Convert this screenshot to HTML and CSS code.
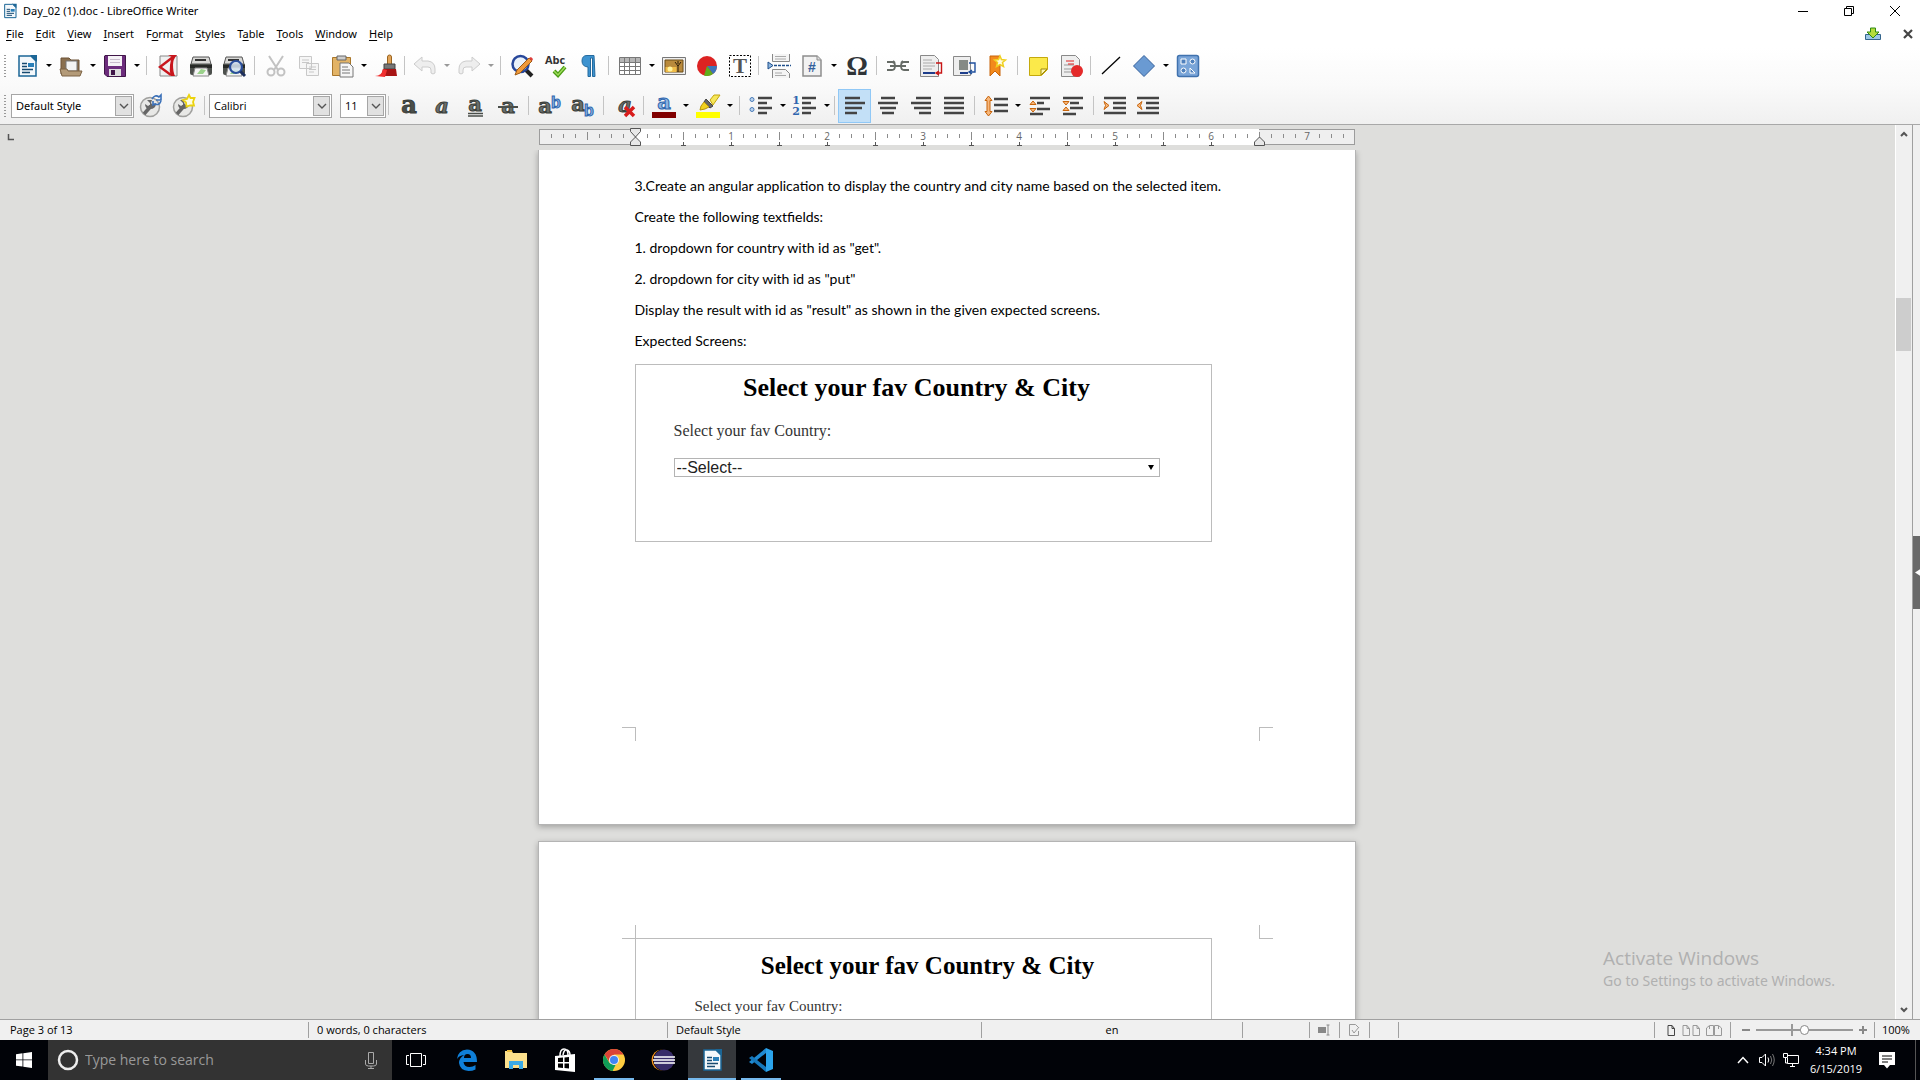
FILE: index.html
```html
<!DOCTYPE html>
<html lang="en">
<head>
<meta charset="utf-8">
<title>Day_02 (1).doc - LibreOffice Writer</title>
<link rel="stylesheet" href="styles.css">
</head>
<body>
<svg class="defs" aria-hidden="true">
  <defs>
    <symbol id="writer" viewBox="0 0 24 24"><path d="M4 2h12l5 5v15H4z" fill="#f4f8fb" stroke="#1b6696" stroke-width="1.5"/><path d="M15 1h7v7z" fill="#1b6696"/><path d="M7 9.5h5M7 12.500h5M7 15.500h11M7 18.500h8" stroke="#174a70" stroke-width="1.500"/><path d="M13 9h6v4h-6z" fill="#2a7fb8"/></symbol>
    <symbol id="printer" viewBox="0 0 24 24"><path d="M4 3h16l2 7H2z" fill="#d8d8d6" stroke="#555"/><path d="M6 6h11" stroke="#333" stroke-width="2"/><path d="M1 10h22v9q0 2-2 2H3q-2 0-2-2z" fill="#4c504c"/><path d="M1 11h22v3H1z" fill="#272927"/><path d="M6 14h12l2 8H4z" fill="#f5f5f5" stroke="#888"/><path d="M8 20l4-5 5 1-3 4z" fill="#9bd28b"/></symbol>
    <symbol id="gear" viewBox="0 0 24 24"><circle cx="11" cy="13" r="9.500" fill="#e8e8e6" stroke="#a0a09e" stroke-width="1.500"/><path d="M5 20l7-8" stroke="#666" stroke-width="3.500"/><path d="M8 6l3 3v2l-2 1-3-2q0 5 5 5 6 0 6-6l-3 2-2-2 1-3z" fill="#666"/></symbol>
    <symbol id="doc" viewBox="0 0 24 24"><path d="M3 2h14l4 4v16H3z" fill="#f2f2f2" stroke="#8d8d8d" stroke-width="1.500"/><path d="M17 2v4h4" fill="#ddd" stroke="#8d8d8d"/></symbol>
    <symbol id="chev" viewBox="0 0 10 6"><path d="M1 1l4 4 4-4" fill="none" stroke="#555" stroke-width="1.400"/></symbol>
    <symbol id="page" viewBox="0 0 8 11"><path d="M1 .5h4l2.500 3v7H1zM5 .5v3h2.500" fill="none" stroke="currentColor"/></symbol>
  </defs>
</svg>

<header class="chrome">
  <div class="titlebar">
    <svg class="app-icon"><use href="#writer"/></svg>
    <h1 class="title">Day_02 (1).doc - LibreOffice Writer</h1>
    <div class="window-buttons">
      <button aria-label="Minimize"><svg viewBox="0 0 12 12"><path d="M1 6.500h10" stroke="#000"/></svg></button>
      <button aria-label="Restore"><svg viewBox="0 0 12 12"><path d="M1.500 3.500h7v7h-7zM3.500 3.500v-2h7v7h-2" fill="none" stroke="#000"/></svg></button>
      <button aria-label="Close"><svg viewBox="0 0 12 12"><path d="M1 1l10 10M11 1L1 11" stroke="#000"/></svg></button>
    </div>
  </div>

  <nav class="menubar" aria-label="Menu">
    <button><u>F</u>ile</button><button><u>E</u>dit</button><button><u>V</u>iew</button><button><u>I</u>nsert</button><button>F<u>o</u>rmat</button><button><u>S</u>tyles</button><button>T<u>a</u>ble</button><button><u>T</u>ools</button><button><u>W</u>indow</button><button><u>H</u>elp</button>
    <span class="spacer"></span>
    <button class="mini" aria-label="Update available"><svg width="16" height="14" viewBox="0 0 16 14"><path d="M.5 7.500h15v5H.5z" fill="#9cc6e6" stroke="#34648c"/><path d="M5.500 1h5v4H14l-6 6-6-6h3.500z" fill="#b5dc3c" stroke="#2f8a12"/></svg></button>
    <button class="mini" aria-label="Close document"><svg width="10" height="10" viewBox="0 0 10 10"><path d="M1 1l8 8M9 1L1 9" stroke="#444" stroke-width="2.200"/></svg></button>
  </nav>

  <div class="toolbar" role="toolbar" aria-label="Standard">
    <span class="grip"></span>
    <button class="tool" aria-label="New"><svg><use href="#writer"/></svg></button><button class="drop" aria-label="New options"></button>
    <button class="tool" aria-label="Open"><svg viewBox="0 0 24 24"><path d="M2 4h8l2 2h8v14H2z" fill="#8a6f4e" stroke="#6c5336"/><path d="M7 7h11v10H7z" fill="#f3f3f3" stroke="#777"/><path d="M1 15h7l1 2h14l-2 5H3z" fill="#b39a78" stroke="#7c6344"/></svg></button><button class="drop" aria-label="Open options"></button>
    <button class="tool" aria-label="Save"><svg viewBox="0 0 24 24"><path d="M2 1.500h20.500v21H4L1.500 20V2z" fill="#6c2c7c" stroke="#401648"/><path d="M5 2h14v10H5z" fill="#f5f2f6"/><path d="M7 5.500h10M7 8.500h10" stroke="#c9bccd"/><path d="M6 15h12v7H6z" fill="#ddd"/><path d="M8 16h4v5H8z" fill="#401648"/></svg></button><button class="drop" aria-label="Save options"></button>
    <span class="sep"></span>
    <button class="tool" aria-label="Export as PDF"><svg viewBox="0 0 24 24"><path d="M4 2h17v20H4z" fill="#f0f0f0" stroke="#888"/><path d="M17 3L4 13l11 8" fill="none" stroke="#c8161d" stroke-width="2.400"/><path d="M12 1h9q-4 4-4 10 0 7 2 11h-4q-2-5-1-11 1-6 2-8z" fill="#c8161d"/></svg></button>
    <button class="tool" aria-label="Print"><svg><use href="#printer"/></svg></button>
    <button class="tool" aria-label="Print preview"><svg viewBox="0 0 24 24"><use href="#printer" width="24" height="24"/><circle cx="14" cy="13" r="6" fill="#d8e6f4" fill-opacity=".85" stroke="#2b4f9c" stroke-width="2.200"/><path d="M18.500 17.500L23 22" stroke="#1d2f5c" stroke-width="3"/></svg></button>
    <span class="sep"></span>
    <button class="tool" aria-label="Cut" disabled><svg viewBox="0 0 24 24" fill="none" stroke="#c2c2c2" stroke-width="2"><path d="M5 2l9 14M19 2l-9 14"/><circle cx="7" cy="18" r="3.500"/><circle cx="17" cy="18" r="3.500"/></svg></button>
    <button class="tool" aria-label="Copy" disabled><svg viewBox="0 0 24 24" fill="#f6f6f6" stroke="#c8c8c8"><path d="M2.500 2.500h12v12h-12zM9.500 9.500h12v12h-12z"/><path d="M5 6h7M5 8.500h7M12 13h7M12 15.500h7M12 18h5"/></svg></button>
    <button class="tool" aria-label="Paste"><svg viewBox="0 0 24 24"><path d="M2.500 3.500h18v18h-18z" fill="#e2b366" stroke="#a9762a"/><path d="M7 2h9v4H7z" fill="#ccc" stroke="#666"/><path d="M10 9h9l4 4v10H10z" fill="#f7f7f7" stroke="#777"/><path d="M12 13h6M12 16h8M12 19h8" stroke="#777"/></svg></button><button class="drop" aria-label="Paste options"></button>
    <button class="tool" aria-label="Clone formatting"><svg viewBox="0 0 24 24"><path d="M13.500 10V3q0-2 2-2t2 2v7" fill="#e2a458" stroke="#9a6420"/><path d="M10 10h11v5H10z" fill="#777" stroke="#444"/><path d="M9 15h13l1 7H7z" fill="#a81414"/><path d="M1 22q7 0 8-7l4 1-2 7z" fill="#f03030"/></svg></button>
    <span class="sep tight"></span>
    <button class="tool" aria-label="Undo" disabled><svg viewBox="0 0 24 24"><path d="M1 10l8-7v4h6q7 1 7 8v4q-2 2-4 0v-3q0-3-3-3H9v4z" fill="#eee" stroke="#ccc"/></svg></button><button class="drop dim" aria-label="Undo options"></button>
    <button class="tool" aria-label="Redo" disabled><svg viewBox="0 0 24 24"><path d="M23 10l-8-7v4H9q-7 1-7 8v4q2 2 4 0v-3q0-3 3-3h6v4z" fill="#eee" stroke="#ccc"/></svg></button><button class="drop dim" aria-label="Redo options"></button>
    <span class="sep"></span>
    <button class="tool" aria-label="Find and replace"><svg viewBox="0 0 24 24"><path d="M16 16l6 6" stroke="#222" stroke-width="4"/><circle cx="10.500" cy="10" r="8" fill="#e9f1fa" stroke="#27479a" stroke-width="2.500"/><path d="M5 21l2-5L19 4l3 3L10 19z" fill="#f09a3a" stroke="#9c5a14"/><path d="M19 4l3 3 1-2-2-2z" fill="#e03c3c"/></svg></button>
    <button class="tool" aria-label="Spelling"><svg viewBox="0 0 24 24"><text class="glyph-abc" x="12" y="10">Abc</text><path d="M11 17l4 4 7-8" fill="none" stroke="#4a9c14" stroke-width="4"/><path d="M11 17l4 4 7-8" fill="none" stroke="#9fdc5c" stroke-width="1.500"/></svg></button>
    <button class="tool" aria-label="Formatting marks"><svg viewBox="0 0 24 24"><path d="M18 1.500H11q-5 0-5 5.500t6 6v9.500h2.500V4h2v18.500H19z" fill="#3d93d0" stroke="#246a9e"/></svg></button>
    <span class="sep"></span>
    <button class="tool" aria-label="Table"><svg viewBox="0 0 24 24"><path d="M1.500 3.500h21v17h-21z" fill="#fff" stroke="#777"/><path d="M2 4h20v4H2z" fill="#b5b5b5"/><path d="M1 8.500h22M1 12.500h22M1 16.500h22M6.500 4v16M11.500 4v16M17.500 4v16" stroke="#777"/></svg></button><button class="drop" aria-label="Table options"></button>
    <button class="tool" aria-label="Image"><svg viewBox="0 0 24 24"><path d="M.5 3.500h23v17H.5z" fill="#eee" stroke="#777"/><path d="M3 6h18v12H3z" fill="#b98a3c" stroke="#6a4c18"/><path d="M3.500 13h11v5h-11z" fill="#f0bc48"/><circle cx="8" cy="15" r="2.500" fill="#fff3a0"/><path d="M16 18v-6l-3-4M16 12l3-4M16 10V7" fill="none" stroke="#2b1c08"/></svg></button>
    <button class="tool" aria-label="Chart"><svg viewBox="0 0 24 24"><circle cx="12" cy="12" r="10" fill="#dc2222"/><path d="M12 12h10a10 10 0 0 1-4 8z" fill="#3f74b8"/><path d="M12 12l6 8a10 10 0 0 1-9 1.500z" fill="#5fae1c"/></svg></button>
    <button class="tool" aria-label="Text box"><svg viewBox="0 0 24 24"><path d="M1.500 1.500h21v21h-21z" fill="#fff" stroke="#000" stroke-dasharray="2 1.500"/><text class="glyph-t" x="12" y="19">T</text></svg></button>
    <span class="sep tight"></span>
    <button class="tool" aria-label="Page break"><svg viewBox="0 0 24 24"><path d="M5.500 0v7.500h17V0M5.500 24v-8.500h13l4 4V24" fill="#f5f5f5" stroke="#888"/><path d="M8 2.500h11M8 5h11M8 19h7M8 21.500h11" stroke="#aaa"/><path d="M7 11.500h17" stroke="#1f4f8c" stroke-width="1.500" stroke-dasharray="3 1"/><path d="M1 8l5 3.500L1 15z" fill="#8fb8e0" stroke="#1f4f8c"/></svg></button>
    <button class="tool" aria-label="Field"><svg viewBox="0 0 24 24"><use href="#doc" width="24" height="24"/><text class="glyph-hash" x="12" y="18">#</text></svg></button><button class="drop" aria-label="Field options"></button>
    <button class="tool" aria-label="Special character"><svg viewBox="0 0 24 24"><text class="glyph-omega" x="13" y="21">Ω</text></svg></button>
    <span class="sep"></span>
    <button class="tool" aria-label="Hyperlink"><svg viewBox="0 0 24 24" fill="none" stroke="#666b66" stroke-width="1.800"><path d="M1 8h5q3 0 3 4 0 4-3 4H1M23 8h-5q-3 0-3 4 0 4 3 4h5M4 12h16M9 9l-2-2M15 9l2-2"/></svg></button>
    <button class="tool" aria-label="Footnote"><svg viewBox="0 0 24 24"><path d="M1.500 1.500h14l4 4v17h-18z" fill="#eee" stroke="#888"/><path d="M4 6h9M4 9h12M4 12h12M4 15h9" stroke="#aaa"/><path d="M4 19h12" stroke="#1f3f8c" stroke-width="2"/><path d="M17 9h5.500v10H18M20 17l-3 2 3 2" fill="none" stroke="#c81414" stroke-width="1.400"/></svg></button>
    <button class="tool" aria-label="Endnote"><svg viewBox="0 0 24 24"><path d="M1.500 2.500h17v19h-17z" fill="#eee" stroke="#888"/><path d="M7 6h9v10H7z" fill="#858a85"/><path d="M8 19h8" stroke="#1f3f8c" stroke-width="2"/><path d="M17 9h6v9h-5M20 16l-3 2 3 2" fill="none" stroke="#1f4f9c" stroke-width="1.400"/></svg></button>
    <button class="tool" aria-label="Bookmark"><svg viewBox="0 0 24 24"><path d="M5 2h10v20l-5-5-5 5z" fill="#f28a1c" stroke="#c8640a"/><path d="M15 2l1.500 3.500 4 .5-3 2.500 1 4-3.500-2-3.500 2 1-4-3-2.500 4-.5z" fill="#fffbe0" stroke="#f0d020" stroke-width="1.500"/></svg></button>
    <span class="sep"></span>
    <button class="tool" aria-label="Comment"><svg viewBox="0 0 24 24"><path d="M2.500 3.500h18v12l-6 6h-12z" fill="#fbe94a" stroke="#c4a90c"/><path d="M20 15h-6v6z" fill="#fff8b0" stroke="#a08a0a"/></svg></button>
    <button class="tool" aria-label="Track changes"><svg viewBox="0 0 24 24"><path d="M1.500 1.500h14l4 4v17h-18z" fill="#eee" stroke="#888"/><path d="M4 11h10M4 15h9M4 18h8" stroke="#999"/><path d="M6 7h8M8 10h6" stroke="#e02020"/><circle cx="17" cy="17" r="6" fill="#e42a2a"/></svg></button>
    <span class="sep tight"></span>
    <button class="tool" aria-label="Line"><svg viewBox="0 0 24 24"><path d="M3 20L21 3" stroke="#000" stroke-width="1.300"/></svg></button>
    <button class="tool" aria-label="Basic shapes"><svg viewBox="0 0 24 24"><path d="M12 1.500L22.500 12 12 22.500 1.500 12z" fill="#6a9ad2" stroke="#34609c"/></svg></button><button class="drop" aria-label="Shape options"></button>
    <button class="tool" aria-label="Show draw functions"><svg viewBox="0 0 24 24"><rect x="1.500" y="1.500" width="21" height="21" rx="2" fill="#7aa5d8" stroke="#4072ae" stroke-width="1.500"/><path d="M5 5h5v5H5zM14 14v5h5z" fill="#4f80bc" stroke="#fff"/><circle cx="16.500" cy="7.500" r="2.500" fill="#4f80bc" stroke="#fff"/><circle cx="7.500" cy="16.500" r="2.500" fill="#4f80bc" stroke="#fff"/></svg></button>
  </div>

  <div class="toolbar formatting" role="toolbar" aria-label="Formatting">
    <span class="grip"></span>
    <label class="combo style-combo"><select aria-label="Paragraph style"><option>Default Style</option></select><span class="combo-arrow"><svg><use href="#chev"/></svg></span></label>
    <button class="tool" aria-label="Update style"><svg viewBox="0 0 24 24"><use href="#gear" width="24" height="24"/><path d="M13 5q3-5 7-2l2-2v5h-5M22 7q-2 5-6 3l-2 1V7" fill="none" stroke="#3a70b8" stroke-width="1.600"/></svg></button>
    <button class="tool" aria-label="New style"><svg viewBox="0 0 24 24"><use href="#gear" width="24" height="24"/><path d="M17 1l1.500 3 4 0-1.500 4 1 3.500-4 0-3.500 1-.5-4-3-2.500 4-1z" fill="#fffde0" stroke="#ecd30e" stroke-width="1.800"/></svg></button>
    <span class="sep"></span>
    <label class="combo font-combo"><select aria-label="Font name"><option>Calibri</option></select><span class="combo-arrow"><svg><use href="#chev"/></svg></span></label>
    <label class="combo size-combo"><select aria-label="Font size"><option>11</option></select><span class="combo-arrow"><svg><use href="#chev"/></svg></span></label>
    <span class="sep tight"></span>
    <button class="tool" aria-label="Bold"><svg viewBox="0 0 24 24"><text class="glyph-a heavy" x="12" y="19">a</text></svg></button>
    <button class="tool" aria-label="Italic"><svg viewBox="0 0 24 24"><text class="glyph-a slant" x="12" y="19">a</text></svg></button>
    <button class="tool" aria-label="Underline"><svg viewBox="0 0 24 24"><text class="glyph-a" x="12" y="17">a</text><path d="M5 19.500h15M5 22h15" stroke="#4a4e4a" stroke-width="1.500"/></svg></button>
    <button class="tool" aria-label="Strikethrough"><svg viewBox="0 0 24 24"><text class="glyph-a" x="12" y="19">a</text><path d="M2 13h20" stroke="#4a4e4a" stroke-width="2"/></svg></button>
    <span class="sep"></span>
    <button class="tool" aria-label="Superscript"><svg viewBox="0 0 24 24"><text class="glyph-a" x="7" y="19">a</text><text class="glyph-b" x="18" y="14">b</text></svg></button>
    <button class="tool" aria-label="Subscript"><svg viewBox="0 0 24 24"><text class="glyph-a" x="7" y="17">a</text><text class="glyph-b" x="18" y="22">b</text></svg></button>
    <span class="sep"></span>
    <button class="tool" aria-label="Clear formatting"><svg viewBox="0 0 24 24"><text class="glyph-a slant" x="12" y="18">a</text><path d="M12 13l9 9M21 13l-9 9" stroke="#d81c1c" stroke-width="3.500"/></svg></button>
    <span class="sep tight"></span>
    <button class="tool" aria-label="Font color"><svg viewBox="0 0 24 24"><text class="glyph-a blue" x="12" y="15">a</text><path d="M0 18h24v6H0z" fill="#800000"/></svg></button><button class="drop" aria-label="Font color options"></button>
    <button class="tool" aria-label="Highlighting"><svg viewBox="0 0 24 24"><path d="M14 6l4-5h6l-7 10z" fill="#f6e75a" stroke="#c4a60c"/><path d="M10 5l7 7-3 2-6-6z" fill="#666" stroke="#444"/><path d="M8 8l5 5-4 2-5 1 1-4z" fill="#f2d320" stroke="#b8960a"/><path d="M0 18h24v6H0z" fill="#ff0"/></svg></button><button class="drop" aria-label="Highlighting options"></button>
    <span class="sep"></span>
    <button class="tool" aria-label="Bullets"><svg viewBox="0 0 24 24"><g fill="#b9d2ee" stroke="#4a7cb8"><circle cx="3" cy="5.500" r="2"/><circle cx="3" cy="15.500" r="2"/></g><path d="M9 4h14M9 9h9M9 14h14M9 19h9" stroke="#444" stroke-width="2.400"/></svg></button><button class="drop" aria-label="Bullet options"></button>
    <button class="tool" aria-label="Numbering"><svg viewBox="0 0 24 24"><text class="glyph-n" x="3" y="10">1</text><text class="glyph-n" x="3" y="21">2</text><path d="M9 4h14M9 9h9M9 14h14M9 19h9" stroke="#444" stroke-width="2.400"/></svg></button><button class="drop" aria-label="Numbering options"></button>
    <span class="sep tight"></span>
    <button class="tool active" aria-label="Align left" aria-pressed="true"><svg viewBox="0 0 24 24"><path d="M2 4h15M2 9h20M2 14h17M2 19h12" stroke="#444" stroke-width="2.400"/></svg></button>
    <button class="tool" aria-label="Center"><svg viewBox="0 0 24 24"><path d="M5 4h14M2 9h20M4 14h16M6 19h12" stroke="#444" stroke-width="2.400"/></svg></button>
    <button class="tool" aria-label="Align right"><svg viewBox="0 0 24 24"><path d="M7 4h15M2 9h20M5 14h17M10 19h12" stroke="#444" stroke-width="2.400"/></svg></button>
    <button class="tool" aria-label="Justify"><svg viewBox="0 0 24 24"><path d="M2 4h20M2 9h20M2 14h20M2 19h20" stroke="#444" stroke-width="2.400"/></svg></button>
    <span class="sep"></span>
    <button class="tool" aria-label="Line spacing"><svg viewBox="0 0 24 24"><path d="M4.500 2L8 6.500H6v11h2L4.500 22 1 17.500h2v-11H1z" fill="#f7b77c" stroke="#c8640a"/><path d="M10 5h14M10 11h14M10 17h14" stroke="#444" stroke-width="2.400"/></svg></button><button class="drop" aria-label="Line spacing options"></button>
    <button class="tool" aria-label="Increase paragraph spacing"><svg viewBox="0 0 24 24"><path d="M2 4h20M9 9h7M9 15h13M2 20h13" stroke="#444" stroke-width="2.400"/><path d="M5 7l3 3.500H2zM5 18l3-3.500H2z" fill="#f7b77c" stroke="#c8640a"/></svg></button>
    <button class="tool" aria-label="Decrease paragraph spacing"><svg viewBox="0 0 24 24"><path d="M2 4h20M9 9h9M9 14h13M2 20h13" stroke="#444" stroke-width="2.400"/><path d="M5 11l3-3.500H2zM5 13l3 3.500H2z" fill="#f7b77c" stroke="#c8640a"/></svg></button>
    <span class="sep"></span>
    <button class="tool" aria-label="Increase indent"><svg viewBox="0 0 24 24"><path d="M1 4h22M10 9h13M10 14h13M1 19h22" stroke="#444" stroke-width="2.400"/><path d="M1 7.500l5 4-5 4 1.500-4z" fill="#f7b77c" stroke="#c8640a"/></svg></button>
    <button class="tool" aria-label="Decrease indent"><svg viewBox="0 0 24 24"><path d="M1 4h22M10 9h13M10 14h13M1 19h22" stroke="#444" stroke-width="2.400"/><path d="M6 7.500l-5 4 5 4-1.500-4z" fill="#f7b77c" stroke="#c8640a"/></svg></button>
  </div>
</header>

<main class="workspace">
  <section class="canvas" aria-label="Document">
    <div class="ruler-row">
      <svg class="tab-type" viewBox="0 0 8 8"><path d="M1.500 1v5.500H7" fill="none" stroke="#555" stroke-width="1.500"/></svg>
      <svg class="ruler" viewBox="0 0 818 20" aria-label="Ruler">
        <defs>
          <pattern id="ticks" width="12" height="20" x="97" patternUnits="userSpaceOnUse"><path d="M.5 8v4" stroke="#8c8c8c"/></pattern>
          <pattern id="halves" width="96" height="20" x="97" patternUnits="userSpaceOnUse"><path d="M48.500 6v8" stroke="#8c8c8c"/></pattern>
          <pattern id="tabs" width="48" height="20" x="95" patternUnits="userSpaceOnUse"><path d="M2.500 16v3M0 19.500h5" stroke="#555"/></pattern>
        </defs>
        <rect x="1.500" y="3.500" width="815" height="15" fill="#efefef" stroke="#9c9c9c"/>
        <rect x="97" y="3" width="624" height="16" fill="#fff"/>
        <rect x="6" y="3" width="804" height="16" fill="url(#ticks)"/>
        <rect x="6" y="3" width="804" height="16" fill="url(#halves)"/>
        <rect x="120" y="15" width="580" height="5" fill="url(#tabs)"/>
        <g fill="#fff"><path d="M188 5h11v10h-11zM284 5h11v10h-11zM380 5h11v10h-11zM476 5h11v10h-11zM572 5h11v10h-11zM668 5h11v10h-11z"/><path d="M764 5h11v10h-11z" fill="#efefef"/></g>
        <g class="ruler-num"><text x="193" y="14">1</text><text x="289" y="14">2</text><text x="385" y="14">3</text><text x="481" y="14">4</text><text x="577" y="14">5</text><text x="673" y="14">6</text><text x="769" y="14">7</text></g>
        <path d="M92.500 2.500h10v3l-5 5.500-5-5.500zM97.500 11l5 5v3.500h-10V16zM721.500 11l5 5v3.500h-10V16z" fill="#e8e8e8" stroke="#555"/>
      </svg>
    </div>

    <div class="pages">
      <article class="page first">
        <p>3.Create an angular application to display the country and city name based on the selected item.</p>
        <p>Create the following textfields:</p>
        <p>1. dropdown for country with id as "get".</p>
        <p>2. dropdown for city with id as "put"</p>
        <p>Display the result with id as "result" as shown in the given expected screens.</p>
        <p>Expected Screens:</p>
        <figure class="screen screen-one">
          <h2>Select your fav Country &amp; City</h2>
          <label for="country">Select your fav Country:</label>
          <div class="country-box"><select id="country"><option>--Select--</option></select><span class="caret"></span></div>
        </figure>
        <span class="corner bottom-left"></span><span class="corner bottom-right"></span>
      </article>
      <article class="page second">
        <figure class="screen screen-two">
          <h2>Select your fav Country &amp; City</h2>
          <p class="country-label">Select your fav Country:</p>
        </figure>
        <span class="corner top-left"></span><span class="corner top-right"></span>
      </article>
    </div>
    <aside class="watermark"><strong>Activate Windows</strong><span>Go to Settings to activate Windows.</span></aside>
  </section>

  <div class="scrollbar">
    <button aria-label="Scroll up"><svg viewBox="0 0 8 6"><path d="M1 5l3-3 3 3" fill="none" stroke="#555" stroke-width="2"/></svg></button>
    <div class="scroll-track"><div class="scroll-thumb"></div></div>
    <button aria-label="Scroll down"><svg viewBox="0 0 8 6"><path d="M1 1l3 3 3-3" fill="none" stroke="#555" stroke-width="2"/></svg></button>
  </div>
  <aside class="deck"><button class="deck-handle" aria-label="Show sidebar"><svg viewBox="0 0 6 8"><path d="M6 0v8L0 4z" fill="#fff"/></svg></button></aside>
</main>

<footer class="statusbar">
  <span class="cell pages-cell">Page 3 of 13</span>
  <span class="cell words-cell">0 words, 0 characters</span>
  <span class="cell style-cell">Default Style</span>
  <span class="cell lang-cell">en</span>
  <span class="cell gap-cell"></span>
  <span class="cell icon-cell"><svg width="12" height="12" viewBox="0 0 12 12"><path d="M0 3h8v6H0z" fill="#888"/><path d="M8.500 1h3M10 1v10M8.500 11h3" stroke="#888"/></svg></span>
  <span class="cell icon-cell"><svg width="12" height="12" viewBox="0 0 12 12"><path d="M10.500 7v4.500h-9V.5h6l3 3M4 6l2 3 5-6" fill="none" stroke="#999"/></svg></span>
  <span class="cell small-cell"></span>
  <span class="cell fill-cell"></span>
  <span class="cell view-cell"><svg class="view-on" width="8" height="11"><use href="#page"/></svg><svg width="18" height="11" viewBox="0 0 18 11"><use href="#page" width="8" height="11"/><use href="#page" x="10" width="8" height="11"/></svg><svg width="16" height="11" viewBox="0 0 16 11"><path d="M.5 10.500V3l3-2.500h4v10zM8.500.5h4l3 2.500v7.500h-7zM3.500 1v3M12.500 1v3" fill="none" stroke="#999"/></svg></span>
  <span class="cell zoom-cell"><button aria-label="Zoom out"><svg viewBox="0 0 8 8"><path d="M0 4h8" stroke="#888" stroke-width="2"/></svg></button><input type="range" min="0" max="100" value="50" aria-label="Zoom"><button aria-label="Zoom in"><svg viewBox="0 0 8 8"><path d="M0 4h8M4 0v8" stroke="#888" stroke-width="2"/></svg></button></span>
  <span class="cell percent-cell">100%</span>
</footer>

<nav class="taskbar" aria-label="Taskbar">
  <button class="start" aria-label="Start"><svg width="16" height="16" viewBox="0 0 16 16"><path d="M0 2.200l6.500-.9v6.200H0zM7.300 1.200L16 0v7.500H7.300zM0 8.300h6.500v6.300L0 13.700zM7.300 8.300H16V16l-8.700-1.200z" fill="#fff"/></svg></button>
  <div class="search"><svg width="22" height="22" viewBox="0 0 22 22"><circle cx="11" cy="11" r="9" fill="none" stroke="#eee" stroke-width="2.500"/></svg><input type="text" placeholder="Type here to search" aria-label="Search"><svg width="12" height="17" viewBox="0 0 12 17"><path d="M3.500.5h5v11h-5zM.5 8v4q0 2 3 2h5q3 0 3-2V8M6 14v2M3 16.500h6" fill="none" stroke="#aaa"/></svg></div>
  <button aria-label="Task view"><svg width="20" height="16" viewBox="0 0 20 16"><path d="M4.500 1.500h11v13h-11zM3 3.500H.5v9H3M17 3.500h2.500v9H17" fill="none" stroke="#fff"/></svg></button>
  <button aria-label="Edge"><svg width="22" height="22" viewBox="0 0 22 22"><path d="M1 10Q2 1 11 .5 21 1 21 13H7.500q.5 5 6 5 3.500 0 6-2v4.500q-3 1.500-7 1.500Q4 21.500 3 14q0-5 5-8Q3 6.500 1 10zm7-1h7q0-4-3.500-4T8 9z" fill="#0f7fd8" fill-rule="evenodd"/></svg></button>
  <button aria-label="File Explorer"><svg width="22" height="20" viewBox="0 0 22 20"><path d="M0 1h7l1 2h14v15H0z" fill="#fce08c"/><path d="M2 0h5v2H2z" fill="#f0bf3e"/><path d="M4 19v-8h14v8h-4v-4H8v4z" fill="#3aaae6"/></svg></button>
  <button aria-label="Store"><svg width="22" height="24" viewBox="0 0 22 24"><path d="M1 8l20-2v18L1 22z" fill="#fff"/><path d="M6 8Q6 1 10 1t4 6M9 7q1-6 4-5t3 5" fill="none" stroke="#fff" stroke-width="1.500"/><path d="M4 10l5-.5V14H4zM10.500 9.400L15 9v5h-4.500zM4 15.500h5V20l-5-.5zM10.500 15.500H15v5l-4.500-.4z" fill="#000"/></svg></button>
  <button class="running" aria-label="Chrome"><svg width="22" height="22" viewBox="0 0 22 22"><circle cx="11" cy="11" r="11" fill="#ffcd40"/><path d="M1.500 5.500A11 11 0 0 1 20.500 5.500H11L6.500 13z" fill="#db4437"/><path d="M1.500 5.500L6.500 14l6 2-3 6A11 11 0 0 1 1.500 5.500z" fill="#0f9d58"/><circle cx="11" cy="11" r="5" fill="#f1f1f1"/><circle cx="11" cy="11" r="4" fill="#4285f4"/></svg></button>
  <button aria-label="Eclipse"><svg width="24" height="22" viewBox="0 0 24 22"><circle cx="11" cy="11" r="10.500" fill="#f7941e"/><circle cx="13" cy="11" r="11" fill="#000"/><circle cx="13" cy="11" r="10.500" fill="#372c69"/><path d="M3 8h21M2 11h22M3 14h21" stroke="#fff" stroke-width="1.500"/></svg></button>
  <button class="running current" aria-label="LibreOffice Writer"><svg width="24" height="24"><use href="#writer"/></svg></button>
  <button class="running" aria-label="Visual Studio Code"><svg width="24" height="24" viewBox="0 0 24 24"><path d="M17 5L3 16l-3-2 17-14z" fill="#1f8ad2"/><path d="M17 19L3 8l-3 2 17 14z" fill="#1678bc"/><path d="M17 0l7 3v18l-7 3z" fill="#2ba4ec"/></svg></button>
  <div class="tray">
    <button aria-label="Hidden icons"><svg width="12" height="8" viewBox="0 0 12 8"><path d="M1 7l5-5.500L11 7" fill="none" stroke="#fff" stroke-width="1.500"/></svg></button>
    <button aria-label="Volume"><svg width="16" height="14" viewBox="0 0 16 14"><path d="M.5 4.500h2.500l3.500-3.500v12L3 9.500H.5z" fill="none" stroke="#fff"/><path d="M9 4.500q1.500 2.500 0 5" fill="none" stroke="#fff"/><path d="M11.500 3q2.500 4 0 8M13.500 1q3.500 6 0 12" fill="none" stroke="#777"/></svg></button>
    <button aria-label="Network"><svg width="16" height="16" viewBox="0 0 16 16"><path d="M5 3.500h10.500v8H4.500V6M7 14.500h5M9.500 12v3M.5 1.500h4v4h-4zM2.500 6v5h2" fill="none" stroke="#fff"/></svg></button>
    <time class="clock"><span>4:34 PM</span><span>6/15/2019</span></time>
    <button aria-label="Notifications"><svg width="16" height="18" viewBox="0 0 16 18"><path d="M0 1h16v13h-5l-3 3.500L5 14H0z" fill="#fff"/><path d="M3 5h10M3 8h10M3 11h6" stroke="#000"/></svg></button>
  </div>
</nav>
</body>
</html>
```
FILE: styles.css
```css
* { box-sizing: border-box; }
html, body { height: 100%; }
body {
  margin: 0;
  display: flex;
  flex-direction: column;
  overflow: hidden;
  background: #dededc;
  color: #000;
  font: 11px/16px "Open Sans", "Noto Sans", sans-serif;
}
button { border: 0; padding: 0; background: none; color: inherit; font: inherit; display: flex; align-items: center; justify-content: center; }
svg { display: block; flex: none; }
h1, h2, p, figure { margin: 0; }
.defs { position: absolute; width: 0; height: 0; }

/* window chrome */
.chrome { flex: none; background: linear-gradient(#fff 48px, #fafafa 85px, #f0f0f0); border-bottom: 1px solid #a8a8a8; }
.titlebar { display: flex; align-items: center; height: 22px; padding: 0 2px; }
.app-icon { width: 16px; height: 16px; }
.title { margin-left: 5px; font: 11px/16px "Noto Sans", sans-serif; }
.window-buttons { display: flex; margin-left: auto; }
.window-buttons button { width: 46px; height: 22px; }
.window-buttons svg { width: 12px; height: 12px; }
.menubar { display: flex; align-items: center; height: 26px; padding: 0 3px 2px 2px; font-family: "Noto Sans", sans-serif; }
.menubar button { padding: 0 4px; margin-right: 4px; display: block; }
.menubar u { text-underline-offset: 2px; }
.spacer { flex: 1; }
.menubar .mini { margin: 0 0 0 14px; }

/* toolbars */
.toolbar { display: flex; align-items: center; height: 37px; padding-bottom: 2px; }
.formatting { height: 39px; padding-top: 2px; padding-bottom: 0; }
.grip { width: 2px; height: 22px; margin: 0 4px; background: repeating-linear-gradient(#999 0 1px, transparent 1px 3px); }
.tool { width: 33px; height: 34px; flex: none; }
.tool svg { width: 24px; height: 24px; overflow: visible; }
.tool.active { background: #c3e0f7; border: 1px solid #90c8f6; }
.drop { width: 11px; height: 34px; flex: none; }
.drop::before { content: ""; border: 3px solid transparent; border-top-color: #000; border-bottom: 0; }
.drop.dim::before { border-top-color: #999; }
.sep { width: 1px; height: 19px; margin: 0 4px; background: #c4c4c4; flex: none; }
.sep.tight { margin: 0 3px 0 2px; }
.combo { display: flex; height: 24px; border: 1px solid #a6a6a6; background: #fff; flex: none; padding: 1px; }
.combo select { appearance: none; flex: 1; min-width: 0; border: 0; padding: 0 0 0 3px; background: none; font: inherit; color: #000; }
.combo-arrow { width: 17px; display: flex; align-items: center; justify-content: center; background: #e1e1e1; border: 1px solid #a6a6a6; }
.combo-arrow svg { width: 10px; height: 6px; }
.style-combo { width: 123px; margin-left: 1px; font-family: "Noto Sans", sans-serif; }
.font-combo { width: 123px; margin-right: 8px; }
.size-combo { width: 46px; }
.glyph-a { font: 700 21px "DejaVu Serif", serif; fill: #6a6e6a; stroke: #3a3e3a; stroke-width: 1px; text-anchor: middle; }
.glyph-a.heavy { font-size: 24px; fill: #4a4e4a; }
.glyph-a.slant { font-style: italic; }
.glyph-a.blue { fill: #8db4e2; stroke: #2f66ae; }
.glyph-b { font: 700 16px "Liberation Sans", sans-serif; fill: #8db4e2; stroke: #2f66ae; text-anchor: middle; }
.glyph-n { font: 700 11px "DejaVu Serif", serif; fill: #2f66ae; text-anchor: middle; }
.glyph-abc { font: 700 11px "Open Sans", sans-serif; fill: #333; text-anchor: middle; }
.glyph-t { font: 700 21px "Liberation Serif", serif; fill: #555; text-anchor: middle; }
.glyph-hash { font: 700 14px "Liberation Sans", sans-serif; fill: #34609c; text-anchor: middle; }
.glyph-omega { font: 700 27px "Liberation Serif", serif; fill: #2f3437; text-anchor: middle; }

/* document area */
.workspace { flex: 1; min-height: 0; display: flex; }
.canvas { flex: 1; min-width: 0; position: relative; overflow: hidden; display: flex; flex-direction: column; padding-right: 2px; }
.ruler-row { flex: none; height: 25px; display: flex; justify-content: center; padding-top: 1px; position: relative; }
.tab-type { position: absolute; left: 7px; top: 8px; width: 8px; height: 8px; }
.ruler { width: 818px; height: 20px; }
.ruler-num { font: 10px "Open Sans", sans-serif; fill: #666; text-anchor: middle; }
.pages { flex: 1; min-height: 0; overflow: hidden; display: flex; flex-direction: column; align-items: center; }
.page { position: relative; flex: none; width: 818px; background: #fff; border: 1px solid #b4b4b4; box-shadow: 0 2px 6px rgba(0, 0, 0, .28); padding-left: 96px; font: 14px/31px Lato, "Open Sans", sans-serif; }
.first { height: 675px; border-top: 0; padding-top: 20px; }
.second { height: 1056px; margin-top: 16px; padding-top: 96px; }
.screen { width: 577px; border: 1px solid #bcbcbc; font: 16px/20px "Liberation Serif", serif; }
.screen h2 { font-weight: 700; line-height: 30px; white-space: nowrap; text-align: center; }
.screen-one { height: 178px; margin-top: 8px; padding: 8px 51px 0 38px; }
.screen-one h2 { font-size: 26px; }
.screen-one label { display: block; margin: 18px 0 17px; color: #333; }
.country-box { display: flex; align-items: center; border: 1px solid #b4b4b4; height: 19px; padding: 0 5px 0 2px; }
.country-box select { appearance: none; flex: 1; border: 0; padding: 0; background: none; color: #222; font: 16px/16px "Liberation Sans", sans-serif; }
.caret { border: 3px solid transparent; border-top: 5px solid #000; border-bottom: 0; }
.screen-two { height: 178px; padding: 12px 0 0 59px; }
.screen-two h2 { font-size: 25px; padding-right: 50px; }
.country-label { margin-top: 15px; line-height: 20px; font-size: 15px; color: #333; }
.corner { position: absolute; width: 14px; height: 14px; border: 0 solid #bcbcbc; }
.bottom-left { left: 83px; top: 577px; border-width: 1px 1px 0 0; }
.bottom-right { right: 82px; top: 577px; border-width: 1px 0 0 1px; }
.top-left { left: 83px; top: 83px; border-width: 0 1px 1px 0; }
.top-right { right: 82px; top: 83px; border-width: 0 0 1px 1px; }
.watermark { position: absolute; right: 60px; bottom: 28px; display: flex; flex-direction: column; color: #b0b0b0; font: 14px/20px "Noto Sans", sans-serif; }
.watermark strong { font: 400 19px/26px "Open Sans", sans-serif; }

.scrollbar { width: 17px; flex: none; display: flex; flex-direction: column; background: #f0f0f0; border-left: 1px solid #fff; }
.scrollbar button { height: 18px; }
.scrollbar svg { width: 8px; height: 6px; }
.scroll-track { flex: 1; padding-top: 155px; }
.scroll-thumb { width: 15px; height: 53px; background: #cdcdcd; }
.deck { width: 8px; flex: none; background: #f0f0f0; border-left: 1px solid #a0a0a0; display: flex; align-items: center; }
.deck-handle { width: 7px; height: 73px; background: #696969; justify-content: flex-end; }
.deck-handle svg { width: 5px; height: 7px; }

/* status bar */
.statusbar { flex: none; height: 21px; display: flex; padding-top: 2px; background: #f0f0f0; border-top: 1px solid #a0a0a0; }
.cell { display: flex; align-items: center; height: 16px; border-right: 1px solid #a0a0a0; padding-left: 8px; flex: none; white-space: nowrap; }
.pages-cell { width: 309px; padding-left: 10px; }
.words-cell { width: 359px; }
.style-cell { width: 314px; }
.lang-cell { width: 261px; justify-content: center; padding: 0; }
.gap-cell { width: 67px; }
.icon-cell { width: 30px; }
.small-cell { width: 29px; }
.fill-cell { flex: 1; }
.view-cell { width: 76px; padding: 0 8px 0 12px; justify-content: space-between; color: #999; }
.view-on { color: #444; }
.zoom-cell { width: 144px; padding: 0 7px 0 11px; gap: 6px; }
.zoom-cell svg { width: 8px; height: 8px; }
.zoom-cell input { appearance: none; flex: 1; min-width: 0; margin: 0; height: 12px; background: linear-gradient(#999, #999) 35px 0/2px 12px no-repeat, linear-gradient(#999, #999) 0 5px/100% 2px no-repeat; }
.zoom-cell input::-webkit-slider-thumb { appearance: none; width: 9px; height: 10px; border: 1px solid #888; border-radius: 5px; background: #fff; }
.percent-cell { width: 45px; border: 0; padding-left: 7px; }

/* taskbar */
.taskbar { flex: none; height: 40px; display: flex; background: #010308; color: #fff; }
.taskbar > button { position: relative; width: 48px; margin-right: 1px; }
.taskbar > .start { margin: 0; }
.search { width: 344px; display: flex; align-items: center; padding: 0 15px 0 9px; gap: 6px; background: #333; }
.taskbar > .search + button { margin-right: 3px; }
.search input { flex: 1; min-width: 0; border: 0; padding: 0; background: none; font: 14px/20px "Open Sans", sans-serif; color: #fff; }
.search input::placeholder { color: #999; opacity: 1; }
.running::after { content: ""; position: absolute; bottom: 0; left: 4px; right: 4px; height: 2px; background: #76b9ed; }
.current { background: #35383c; }
.current::after { left: 0; right: 0; }
.tray { margin: 0 4px 0 auto; display: flex; align-items: center; border-right: 1px solid #555; }
.tray button { width: 24px; height: 40px; }
.clock { width: 66px; display: flex; flex-direction: column; align-items: center; line-height: 18px; }
.tray .clock + button { width: 36px; margin-right: 10px; }
```
